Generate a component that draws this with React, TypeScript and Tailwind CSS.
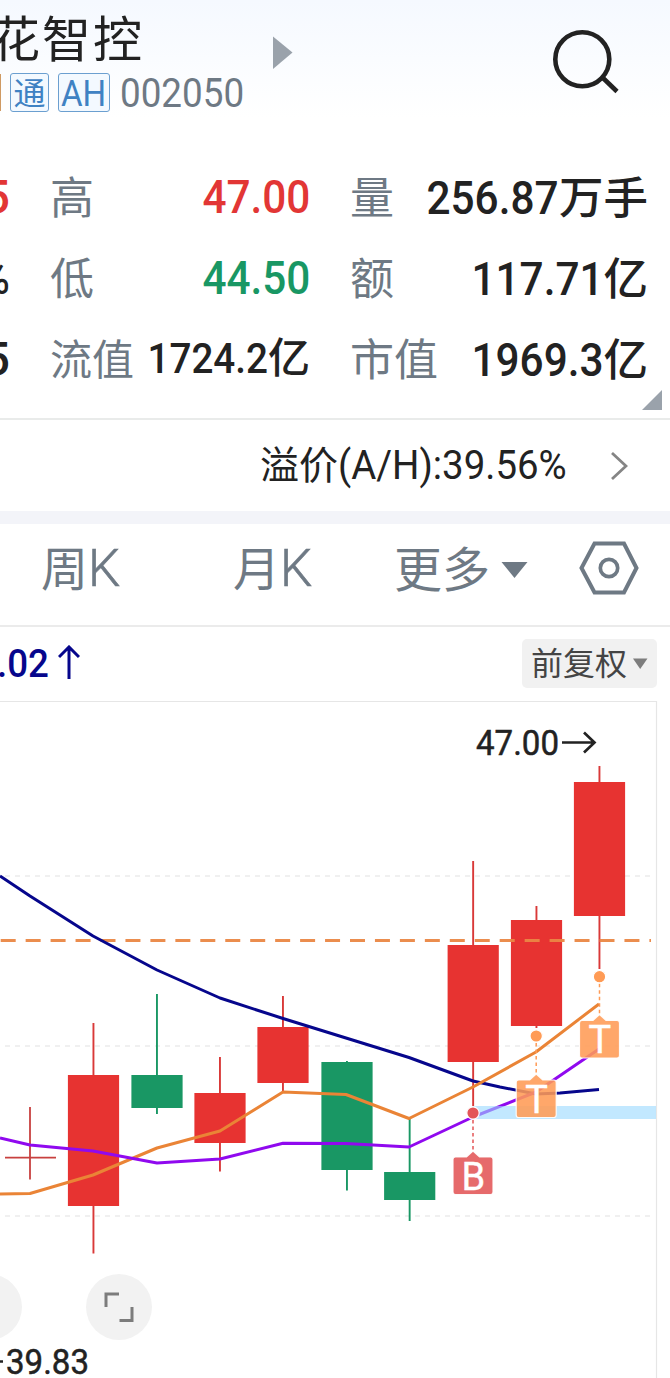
import React from "react";

const cjk = "font-['Noto_Sans_CJK_SC',sans-serif]";

type Candle = { x: number; top: number; bottom: number; high: number; low: number; up: boolean };

const candles: Candle[] = [
  { x: 93.5, top: 1075, bottom: 1206, high: 1023, low: 1253.5, up: true },
  { x: 157, top: 1075, bottom: 1108, high: 994, low: 1114, up: false },
  { x: 220, top: 1093, bottom: 1143, high: 1057, low: 1171.5, up: true },
  { x: 283, top: 1027, bottom: 1083, high: 996, low: 1092, up: true },
  { x: 347, top: 1062, bottom: 1170, high: 1061, low: 1190.5, up: false },
  { x: 409.7, top: 1172, bottom: 1200, high: 1119, low: 1221, up: false },
  { x: 473.2, top: 945, bottom: 1062, high: 861, low: 1106, up: true },
  { x: 536.5, top: 920, bottom: 1026, high: 906, low: 1028, up: true },
  { x: 599.5, top: 782, bottom: 916, high: 766, low: 969, up: true },
];

function Marker({ x, dot, top, label, color }: { x: number; dot: number; top: number; label: string; color: string }) {
  return (
    <g>
      <line x1={x} x2={x} y1={dot + 7} y2={top} stroke={color} strokeWidth="1.5" strokeDasharray="3.5 3" />
      <circle cx={x} cy={dot} r="6.2" fill={color} stroke="#fff" strokeWidth="1.2" />
      <path
        d={`M${x} ${top - 0.5}l6.5 6H${x + 17.5}q2.5 0 2.5 2.5v32.500q0 2.500-2.500 2.500H${x - 17.5}q-2.500 0-2.500-2.500V${top + 8}q0-2.500 2.500-2.500H${x - 6.5}z`}
        fill={color}
        fillOpacity="0.88"
        stroke="#fff"
        strokeWidth="1.2"
        strokeOpacity="0.9"
      />
      <text x={x + 0.3} y={top + 38} textAnchor="middle" fill="#fff" stroke="#fff" strokeWidth="0.4" fontFamily="Roboto, sans-serif" fontSize="38">
        {label}
      </text>
    </g>
  );
}

function Chart() {
  return (
    <svg className="block h-[677px] w-[670px]" viewBox="0 701 670 677">
      <path d="M0 701.500H656.500V1378" fill="none" stroke="#e6e6e6" strokeWidth="1.2" />
      {[876, 1046, 1216].map((y) => (
        <line key={y} x1="0" x2="650" y1={y} y2={y} stroke="#ececec" strokeWidth="1.4" strokeDasharray="5 5" strokeDashoffset="5" />
      ))}
      <g stroke="#c8403f" strokeWidth="1.8">
        <line x1="30" x2="30" y1="1107" y2="1179.500" />
        <line x1="5" x2="56" y1="1157.700" y2="1157.700" />
      </g>
      {candles.map((c) => {
        const color = c.up ? "#e73331" : "#199764";
        return (
          <g key={c.x} fill={color}>
            <rect x={c.x - 1} y={c.high} width="1.9" height={c.low - c.high} fill={c.up ? "#d93938" : color} />
            <rect x={c.x - 25.6} y={c.top} width="51.200" height={c.bottom - c.top} />
          </g>
        );
      })}
      <line x1="0.700" x2="651" y1="940.500" y2="940.500" stroke="#ea8744" strokeOpacity="0.95" strokeWidth="2.800" strokeDasharray="15 9.950" />
      <g fill="none" strokeWidth="3" strokeLinejoin="round">
        <path d="M0 876L30 896L93 936L157 970L220 998L283 1018.500L346 1038L409 1057.500L473 1081L500 1087L536 1094L560 1093L599 1089.500" stroke="#06068c" />
        <path d="M0 1194L30 1193.500L93 1175L157 1148L220 1131L283 1092L346 1094.500L409 1118.500L473 1087L536 1052L599 1004" stroke="#ea8436" />
        <path d="M0 1138L30 1145L93 1151L157 1163L220 1159L283 1143.300L346 1143.500L409 1147L473 1117L536 1092L599 1049" stroke="#9009ef" />
      </g>
      <rect x="473" y="1106" width="183" height="13" fill="#99d9ff" fillOpacity="0.6" />
      <Marker x={473} dot={1113} top={1151.5} label="B" color="#e35557" />
      <Marker x={536.2} dot={1036} top={1074.5} label="T" color="#ff9b55" />
      <Marker x={599.5} dot={976.7} top={1015} label="T" color="#ff9b55" />
      <g fill="#222" fontFamily="Roboto, sans-serif" fontSize="34.500" stroke="#222" strokeWidth="0.500">
        <text x="476" y="755" textLength="83" lengthAdjust="spacingAndGlyphs">47.00</text>
        <text x="6" y="1374" textLength="83" lengthAdjust="spacingAndGlyphs">39.83</text>
      </g>
      <path d="M562 742.500H594M584 732.500L594.500 742.500L584 752.500M0 1361.500H3" fill="none" stroke="#222" strokeWidth="2.700" />
      <circle cx="-11" cy="1307" r="33" fill="#f2f2f2" />
      <circle cx="119" cy="1307" r="33" fill="#f2f2f2" />
      <path d="M106 1307V1294H119M119.500 1320.500H132V1307" fill="none" stroke="#7c7c7c" strokeWidth="3" />
    </svg>
  );
}

function Cell({ label, num, unit, tone, compact }: { label: string; num: string; unit?: string; tone: string; compact?: boolean }) {
  return (
    <div className="flex h-[81px] items-center justify-between whitespace-nowrap leading-none">
      <span className={`${cjk} -ml-[1px] pb-[6px] text-[#6e7984] ${compact ? "text-[42px]" : "text-[44px]"}`}>{label}</span>
      <span className={`flex w-0 items-baseline justify-end font-medium ${tone} ${compact ? "pb-[5px]" : "pb-[2px]"}`}>
        <span className={`origin-right scale-x-[0.92] font-[Roboto,sans-serif] ${compact ? "text-[42px]" : "text-[46px]"}`}>{num}</span>
        {unit && <span className={`${cjk} ${compact ? "text-[42px]" : "text-[44.5px]"}`}>{unit}</span>}
      </span>
    </div>
  );
}

export default function App() {
  return (
    <div className="h-[1378px] w-[670px] overflow-hidden bg-white text-[#222]">
      <header className="flex h-[157px] bg-gradient-to-b from-[#f5f9ff] to-white to-75%">
        <div className="w-[272px] shrink-0 pt-[8px]">
          <div className={`${cjk} -ml-[9px] h-[56px] whitespace-nowrap text-[49px] leading-[56px] tracking-[2px]`}>花智控</div>
          <div className="mt-[9px] flex h-[39px] items-center">
            <span className="h-[37px] w-[1px] bg-[#cf9a63]" />
            <span className={`${cjk} ml-[9px] flex h-[39px] w-[39px] items-center justify-center rounded-[3px] border border-[#6b9fd0] bg-[#f3f9ff] pb-[3px] text-[32px] leading-none text-[#3f82c3]`}>通</span>
            <span className="ml-[9px] flex h-[39px] w-[52px] items-center justify-center rounded-[3px] border border-[#6b9fd0] bg-[#f3f9ff] pt-[3px] font-[Roboto,sans-serif] text-[36px] leading-none text-[#3f82c3]">
              <span className="scale-x-[0.92]">AH</span>
            </span>
            <span className="ml-[10px] origin-left scale-x-[0.92] pt-[2px] font-[Roboto,sans-serif] text-[40px] leading-none text-[#6e7984]">002050</span>
          </div>
        </div>
        <svg className="mt-[36px] h-[34px] w-[21px]" viewBox="0 0 21 34">
          <path d="M1 0.500L20.500 16.500L1 33z" fill="#9aa2ab" />
        </svg>
        <svg className="ml-[257px] mt-[27px] h-[70px] w-[72px]" viewBox="550 27 72 70" fill="none" stroke="#222">
          <circle cx="582.300" cy="59.300" r="27" strokeWidth="4.600" />
          <path d="M602.500 77.500L617 91.500" strokeWidth="4.600" />
        </svg>
      </header>

      <section className="flex h-[243px]">
        <div className="w-[10px] shrink-0 font-[Roboto,sans-serif] text-[46px] font-medium leading-[81px]">
          <div className="flex h-[81px] justify-end text-[#e23635]"><span>5</span></div>
          <div className="flex h-[81px] justify-end"><span className="origin-right scale-x-[0.88]">%</span></div>
          <div className="flex h-[81px] justify-end"><span>5</span></div>
        </div>
        <div className="ml-[41px] w-[259px]">
          <Cell label="高" num="47.00" tone="text-[#e23635]" />
          <Cell label="低" num="44.50" tone="text-[#199764]" />
          <Cell label="流值" num="1724.2" unit="亿" tone="text-[#222]" compact />
        </div>
        <div className="ml-[41px] w-[297px]">
          <Cell label="量" num="256.87" unit="万手" tone="text-[#222]" />
          <Cell label="额" num="117.71" unit="亿" tone="text-[#222]" />
          <Cell label="市值" num="1969.3" unit="亿" tone="text-[#222]" />
        </div>
      </section>
      <div className="flex h-[20px] justify-end border-b-2 border-[#e9ebea] pr-[8px]">
        <svg className="-mt-[10px] h-[20px] w-[20px]" viewBox="0 0 20 20">
          <path d="M20 0V20H0z" fill="#9aa2ab" />
        </svg>
      </div>

      <div className="flex h-[91px] items-center justify-end pr-[42px] leading-none">
        <span className={`${cjk} pb-[6px] text-[39px]`}>溢价</span>
        <span className="w-[229px] whitespace-nowrap font-[Roboto,sans-serif] text-[40px]">
          <span className="inline-block origin-left scale-x-[0.96]">(A/H):39.56%</span>
        </span>
        <svg className="ml-[43px] h-[30px] w-[18px]" viewBox="0 0 18 30" fill="none" stroke="#858585" strokeWidth="2.800">
          <path d="M2 2L16 15L2 28" />
        </svg>
      </div>
      <div className="h-[13px] bg-[#f3f4f9]" />

      <nav className={`${cjk} flex h-[103px] items-center border-b-2 border-[#ebebeb] pb-[14px] text-[47px] leading-none text-[#6e7984]`}>
        <span className="ml-[41px] flex w-[192px] items-baseline">周<span className="font-[Roboto,sans-serif] text-[51px] font-light [-webkit-text-stroke:0.6px_#6e7984]">K</span></span>
        <span className="flex w-[162px] items-baseline">月<span className="font-[Roboto,sans-serif] text-[51px] font-light [-webkit-text-stroke:0.6px_#6e7984]">K</span></span>
        <span className="-ml-[1px] pb-[3px] text-[48px]">更多</span>
        <svg className="ml-[11px] mt-[4px] h-[18px] w-[27px]" viewBox="0 0 27 18">
          <path d="M0.500 1H26.500L13.500 17z" fill="#6e7984" />
        </svg>
        <svg className="ml-[50px] h-[56px] w-[62px]" viewBox="578 540 62 56" fill="none" stroke="#6e7984">
          <path d="M594.500 543.500H624L636.500 568L624 592.500H594.500L581.500 568z" strokeWidth="4" />
          <circle cx="609" cy="568" r="8.700" strokeWidth="3.700" />
        </svg>
      </nav>

      <div className="flex h-[74px] items-center justify-between pr-[13px]">
        <div className="flex items-center text-[#06068c]">
          <span className="w-[49px] whitespace-nowrap font-[Roboto,sans-serif] text-[39px] font-medium leading-none">
            <span className="-ml-[3px] inline-block origin-left scale-x-[0.94]">.02</span>
          </span>
          <svg className="-mt-[3px] ml-[9px] h-[35px] w-[22px]" viewBox="0 0 22 35" fill="none" stroke="#06068c" strokeWidth="3">
            <path d="M11 34V3M1 12L11 2L21 12" />
          </svg>
        </div>
        <button className="-mt-[2px] flex h-[49px] w-[135px] items-center rounded-[5px] bg-[#f1f1f1] pl-[9px]">
          <span className={`${cjk} pb-[5px] text-[32px] leading-none text-[#444]`}>前复权</span>
          <svg className="ml-[6px] h-[11px] w-[15px]" viewBox="0 0 15 11">
            <path d="M0 0.500H14.500L7.200 11z" fill="#7d7d7d" />
          </svg>
        </button>
      </div>
      <Chart />
    </div>
  );
}
